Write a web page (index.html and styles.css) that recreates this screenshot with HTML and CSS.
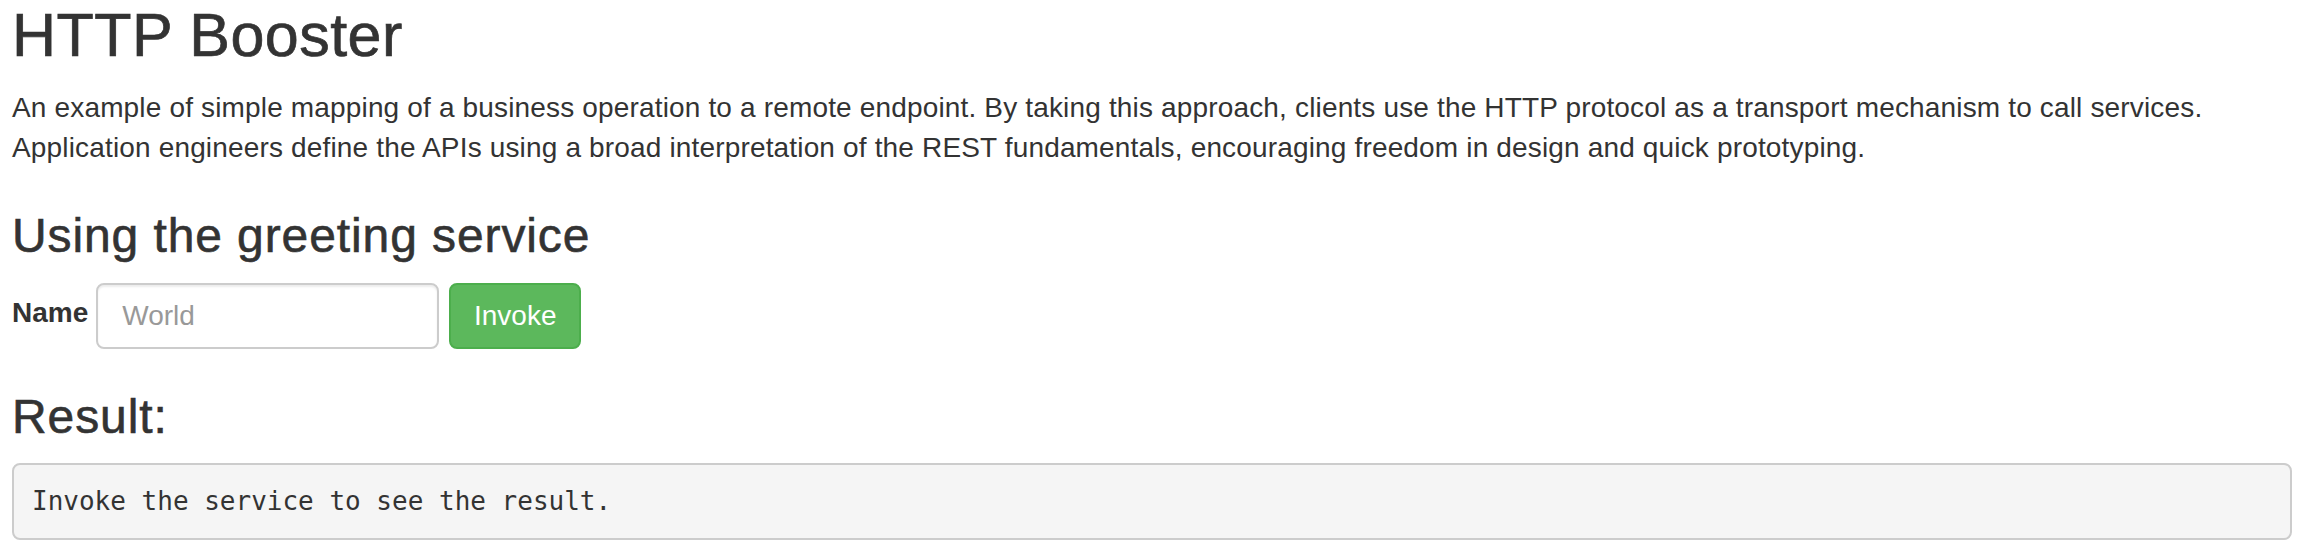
FILE: index.html
```html
<!DOCTYPE html>
<html lang="en">
<head>
<meta charset="utf-8">
<title>HTTP Booster</title>
<link rel="stylesheet" href="styles.css">
</head>
<body>
<div class="container">
  <h1 class="title">HTTP Booster</h1>
  <p class="lead-text">An example of simple mapping of a business operation to a remote endpoint. By taking this approach, clients use the HTTP protocol as a transport mechanism to call services. Application engineers define the APIs using a broad interpretation of the REST fundamentals, encouraging freedom in design and quick prototyping.</p>

  <h3 class="section-title">Using the greeting service</h3>
  <form class="inline-form" onsubmit="return false;">
    <label class="field-label" for="name">Name</label>
    <input class="text-input" id="name" type="text" placeholder="World">
    <button class="btn-success" type="button">Invoke</button>
  </form>

  <h3 class="section-title result-title">Result:</h3>
  <pre class="result-box"><code>Invoke the service to see the result.</code></pre>
</div>
</body>
</html>
```
FILE: styles.css
```css
* { box-sizing: border-box; }

html, body {
  margin: 0;
  padding: 0;
  background: #fff;
}

body {
  font-family: "Liberation Sans", Arial, Helvetica, sans-serif;
  font-size: 28px;
  line-height: 40px;
  color: #333;
}

.container {
  padding: 2px 22px 0 12px;
}

.title {
  font-size: 61px;
  font-weight: normal;
  line-height: 1.1;
  margin: 0 0 19px 0;
  letter-spacing: 0.45px;
  -webkit-text-stroke: 0.7px #333;
}

.lead-text {
  margin: 0 0 42px 0;
  letter-spacing: 0.16px;
}

.section-title {
  font-size: 48px;
  font-weight: normal;
  line-height: 1.1;
  margin: 0 0 20px 0;
  letter-spacing: 0.9px;
  -webkit-text-stroke: 0.6px #333;
}

.inline-form {
  display: flex;
  align-items: center;
  margin: 0;
}

.field-label {
  font-weight: bold;
  margin: 0 8px 6px 0;
}

.text-input {
  width: 343px;
  height: 66px;
  padding: 0 24px;
  font-family: inherit;
  font-size: 28px;
  color: #555;
  background: #fff;
  border: 2px solid #ccc;
  border-radius: 8px;
  box-shadow: inset 0 2px 2px rgba(0, 0, 0, 0.075);
  outline: none;
}

.text-input::placeholder {
  color: #999;
}

.btn-success {
  margin-left: 10px;
  width: 132px;
  height: 66px;
  padding: 0;
  font-family: inherit;
  font-size: 28px;
  color: #fff;
  background: #5cb85c;
  border: 2px solid #4cae4c;
  border-radius: 8px;
  cursor: pointer;
}

.result-title {
  margin-top: 42px;
  margin-bottom: 19px;
}

.result-box {
  margin: 0;
  padding: 18px 18px;
  font-family: "DejaVu Sans Mono", "Liberation Mono", monospace;
  font-size: 26px;
  line-height: 37px;
  color: #333;
  background: #f5f5f5;
  border: 2px solid #ccc;
  border-radius: 8px;
}

.result-box code {
  font-family: inherit;
}
```
